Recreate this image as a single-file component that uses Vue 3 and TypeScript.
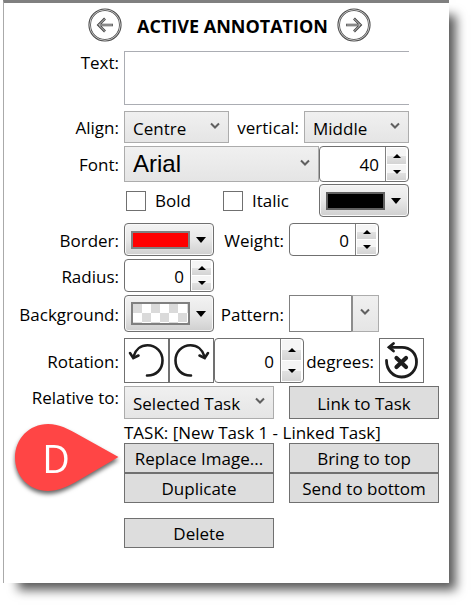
<script setup lang="ts">
import { ref } from 'vue'

const text = ref('')
const align = ref('Centre')
const vertical = ref('Middle')
const font = ref('Arial')
const size = ref(40)
const bold = ref(false)
const italic = ref(false)
const weight = ref(0)
const radius = ref(0)
const pattern = ref('')
const rotation = ref(0)
const relativeTo = ref('Selected Task')
const linkedTask = ref('New Task 1 - Linked Task')

function rotate(step: number): void {
  rotation.value = (rotation.value + step + 360) % 360
}
</script>

<template>
  <div class="page">
    <main class="panel">
      <header class="header">
        <button class="nav" type="button" aria-label="Previous annotation">
          <svg viewBox="0 0 34 34" width="34" height="34" fill="none">
            <circle cx="17" cy="17" r="15.3" stroke="#4a4a4a" stroke-width="2.6" />
            <circle cx="17" cy="17" r="15.3" stroke="#d4d4d4" stroke-width="0.9" />
            <path d="M25 17H11M17 10.500L10.500 17L17 23.500" stroke="#444" stroke-width="2.6" />
            <path d="M24.500 17H11M16.800 10.800L10.600 17L16.800 23.200" stroke="#ddd" stroke-width="0.900" />
          </svg>
        </button>
        <h1 class="title">ACTIVE ANNOTATION</h1>
        <button class="nav" type="button" aria-label="Next annotation">
          <svg viewBox="0 0 34 34" width="34" height="34" fill="none">
            <circle cx="17" cy="17" r="15.3" stroke="#4a4a4a" stroke-width="2.6" />
            <circle cx="17" cy="17" r="15.3" stroke="#d4d4d4" stroke-width="0.9" />
            <path d="M9 17H23M17 10.500L23.500 17L17 23.500" stroke="#444" stroke-width="2.6" />
            <path d="M9.500 17H23M17.200 10.800L23.400 17L17.200 23.200" stroke="#ddd" stroke-width="0.900" />
          </svg>
        </button>
      </header>

      <div class="row row-text">
        <label class="label label-top" for="text">Text:</label>
        <textarea id="text" v-model="text" class="textarea"></textarea>
      </div>

      <div class="row row-align">
        <label class="label" for="align">Align:</label>
        <div class="select w-105">
          <select id="align" v-model="align">
            <option>Left</option>
            <option>Centre</option>
            <option>Right</option>
          </select>
          <svg class="chevron" viewBox="0 0 10 8" width="10" height="8"><path d="M1 1.500L5 5.500L9 1.500" /></svg>
        </div>
        <label class="label-mid" for="vertical">vertical:</label>
        <div class="select w-105">
          <select id="vertical" v-model="vertical">
            <option>Top</option>
            <option>Middle</option>
            <option>Bottom</option>
          </select>
          <svg class="chevron" viewBox="0 0 10 8" width="10" height="8"><path d="M1 1.500L5 5.500L9 1.500" /></svg>
        </div>
      </div>

      <div class="row row-font">
        <label class="label" for="font">Font:</label>
        <div class="select select-font w-195">
          <select id="font" v-model="font">
            <option>Arial</option>
          </select>
          <svg class="chevron" viewBox="0 0 10 8" width="10" height="8"><path d="M1 1.500L5 5.500L9 1.500" /></svg>
        </div>
        <div class="spinner">
          <input v-model.number="size" type="number" aria-label="Font size" />
          <div class="steps">
            <button type="button" aria-label="Increase font size" @click="size++"><i class="up"></i></button>
            <button type="button" aria-label="Decrease font size" @click="size--"><i class="down"></i></button>
          </div>
        </div>
      </div>

      <div class="row row-style">
        <span class="label"></span>
        <div class="checks">
          <label class="check"><input v-model="bold" type="checkbox" />Bold</label>
          <label class="check"><input v-model="italic" type="checkbox" />Italic</label>
        </div>
        <button class="colour" type="button" aria-label="Text colour">
          <span class="swatch black"></span><i class="drop"></i>
        </button>
      </div>

      <div class="row row-border">
        <label class="label" for="border-colour">Border:</label>
        <button id="border-colour" class="colour" type="button">
          <span class="swatch red"></span><i class="drop"></i>
        </button>
        <label class="label-mid" for="weight">Weight:</label>
        <div class="spinner">
          <input id="weight" v-model.number="weight" type="number" />
          <div class="steps">
            <button type="button" aria-label="Increase weight" @click="weight++"><i class="up"></i></button>
            <button type="button" aria-label="Decrease weight" @click="weight--"><i class="down"></i></button>
          </div>
        </div>
      </div>

      <div class="row row-radius">
        <label class="label" for="radius">Radius:</label>
        <div class="spinner">
          <input id="radius" v-model.number="radius" type="number" />
          <div class="steps">
            <button type="button" aria-label="Increase radius" @click="radius++"><i class="up"></i></button>
            <button type="button" aria-label="Decrease radius" @click="radius--"><i class="down"></i></button>
          </div>
        </div>
      </div>

      <div class="row row-background">
        <label class="label" for="background">Background:</label>
        <button id="background" class="colour" type="button">
          <span class="swatch clear"></span><i class="drop"></i>
        </button>
        <label class="label-mid" for="pattern">Pattern:</label>
        <div class="select pattern">
          <select id="pattern" v-model="pattern">
            <option value=""></option>
          </select>
          <span class="pattern-arrow"></span>
          <svg class="chevron" viewBox="0 0 10 8" width="10" height="8"><path d="M1 1.500L5 5.500L9 1.500" /></svg>
        </div>
      </div>

      <div class="row row-rotation">
        <label class="label" for="rotation">Rotation:</label>
        <button class="icon" type="button" aria-label="Rotate left" @click="rotate(-90)">
          <svg viewBox="0 0 45 45" width="45" height="45">
            <path d="M23 37.500C32 37.800 38.500 31.500 38.500 22.500C38.500 14 32 7.300 23.500 7.300C17 7.300 11.500 11.500 9.500 18.500" stroke-width="2.600" />
            <path d="M6 15L9.300 20L14.500 17.500" stroke-width="2.600" />
          </svg>
        </button>
        <button class="icon" type="button" aria-label="Rotate right" @click="rotate(90)">
          <svg viewBox="0 0 45 45" width="45" height="45">
            <path d="M22 37.500C13 37.800 6.500 31.500 6.500 22.500C6.500 14 13 7.300 21.500 7.300C28 7.300 33.500 11.500 35.500 18.500" stroke-width="2.600" />
            <path d="M39 15L35.700 20L30.500 17.500" stroke-width="2.600" />
          </svg>
        </button>
        <div class="spinner">
          <input id="rotation" v-model.number="rotation" type="number" />
          <div class="steps">
            <button type="button" aria-label="Increase rotation" @click="rotate(1)"><i class="up"></i></button>
            <button type="button" aria-label="Decrease rotation" @click="rotate(-1)"><i class="down"></i></button>
          </div>
        </div>
        <span class="label-mid">degrees:</span>
        <button class="icon" type="button" aria-label="Reset rotation" @click="rotation = 0">
          <svg viewBox="0 0 45 45" width="45" height="45">
            <path d="M7.500 22.500C7.500 32 14 39 22.500 39C31.500 39 37.500 32 37.500 24C37.500 15 31 9.300 23 9.300H10.500" stroke-width="2.800" />
            <path d="M14.500 5.500L10 9.300L14.500 13" stroke-width="2.800" />
            <path d="M17.500 20L27 29M27 20L17.500 29" stroke-width="4.200" stroke-linecap="butt" />
          </svg>
        </button>
      </div>

      <div class="row row-relative">
        <label class="label label-top" for="relative">Relative to:</label>
        <div class="select w-150">
          <select id="relative" v-model="relativeTo">
            <option>Selected Task</option>
            <option>Timeline</option>
          </select>
          <svg class="chevron" viewBox="0 0 10 8" width="10" height="8"><path d="M1 1.500L5 5.500L9 1.500" /></svg>
        </div>
        <button class="button after-gap" type="button">Link to Task</button>
      </div>

      <p class="task">TASK: [{{ linkedTask }}]</p>

      <div class="actions">
        <button class="button" type="button">Replace Image...</button>
        <button class="button" type="button">Bring to top</button>
        <button class="button" type="button">Duplicate</button>
        <button class="button" type="button">Send to bottom</button>
        <div class="pin">
          <svg viewBox="0 0 106 70" width="106" height="70">
            <path d="M34 1C15 1 1 16 1 34.500C1 53 15 68 34 68C44 68 52 64 60 60L104.500 34L65 12C54 6 46 1 34 1Z" fill="#ff4545" />
          </svg>
          <span>D</span>
        </div>
      </div>
      <div class="actions last">
        <button class="button" type="button">Delete</button>
      </div>
    </main>
  </div>
</template>

<style>
body {
  margin: 0;
  background: #fff;
}
</style>

<style scoped>
.page {
  padding: 0 27px 27px 3px;
}

.panel {
  box-sizing: border-box;
  padding: 5px 0 35px;
  border-top: 3px solid #808080;
  border-left: 1px solid #aaa;
  background: #fff;
  box-shadow: 11px 11px 10px -4px rgba(0, 0, 0, 0.65);
  color: #000;
  font-family: "Open Sans", "Noto Sans", sans-serif;
  font-size: 17px;
  line-height: 24px;
}

button,
input,
select,
textarea {
  box-sizing: border-box;
  margin: 0;
  padding: 0;
  color: #000;
  font: inherit;
}

.header {
  display: flex;
  align-items: center;
  gap: 15px;
  height: 34px;
  padding-left: 84px;
  margin-bottom: 9px;
}

.nav {
  display: flex;
  flex: none;
  border: 0;
  background: none;
}

.title {
  margin: 0;
  width: 185px;
  padding-top: 1px;
  font-size: 18px;
  font-weight: 700;
  line-height: 24px;
  white-space: nowrap;
}

.row {
  display: flex;
  align-items: stretch;
}

.label,
.label-mid {
  display: flex;
  flex: none;
  box-sizing: border-box;
  align-items: center;
  justify-content: flex-end;
  padding: 2px 5px 0 0;
  white-space: nowrap;
}

.label {
  width: 120px;
}

.label-mid {
  width: 75px;
}

.label-top {
  align-items: flex-start;
  padding-top: 0;
}

.row-text {
  height: 54px;
  margin-bottom: 6px;
}

.row-align {
  height: 32px;
  margin-bottom: 3px;
}

.row-font {
  height: 36px;
  margin-bottom: 2px;
}

.row-style {
  height: 33px;
  margin-bottom: 6px;
}

.row-border,
.row-radius {
  height: 33px;
  margin-bottom: 3px;
}

.row-background {
  height: 37px;
  margin-bottom: 6px;
}

.row-rotation {
  height: 45px;
  margin-bottom: 3px;
}

.row-relative {
  height: 33px;
}

.textarea {
  flex: 1;
  margin-right: 40px;
  padding: 2px 4px;
  border: 1px solid #abadb3;
  border-right: 0;
  border-radius: 0;
  background: #fff;
  resize: none;
}

.select {
  display: grid;
  flex: none;
}

.select > * {
  grid-area: 1 / 1;
}

.select select {
  width: 100%;
  height: 100%;
  padding: 3px 28px 0 8px;
  border: 1px solid #acacac;
  border-radius: 0;
  background: linear-gradient(#f0f0f0, #e5e5e5);
  appearance: none;
}

.select-font select {
  padding-top: 0;
  font-family: "Liberation Sans", Arial, sans-serif;
  font-size: 24px;
}

.chevron {
  align-self: center;
  justify-self: end;
  margin: 0 9px 3px 0;
  pointer-events: none;
}

.chevron path {
  fill: none;
  stroke: #606060;
  stroke-width: 2;
}

.w-105 {
  width: 105px;
}

.w-150 {
  width: 150px;
}

.w-195 {
  width: 195px;
}

.pattern {
  width: 90px;
}

.pattern select {
  border-color: #808080;
  background: #fff;
}

.pattern-arrow {
  justify-self: end;
  width: 28px;
  box-sizing: border-box;
  border: 1px solid #acacac;
  border-left: 2px solid #8c8c8c;
  background: linear-gradient(#f0f0f0, #e5e5e5);
  pointer-events: none;
}

.spinner {
  display: flex;
  flex: none;
  box-sizing: border-box;
  width: 90px;
  border: 1px solid #707070;
  border-radius: 4px;
  background: #fff;
  overflow: hidden;
}

.spinner input {
  flex: 1;
  min-width: 0;
  padding: 2px 6px 0 0;
  border: 0;
  background: none;
  text-align: right;
  appearance: textfield;
}

.spinner input::-webkit-inner-spin-button {
  display: none;
}

.steps {
  display: flex;
  flex-direction: column;
  gap: 1px;
  box-sizing: border-box;
  width: 23px;
  padding: 1px 2px 1px 1px;
  border-left: 1px solid #808080;
}

.steps button {
  display: flex;
  flex: 1;
  align-items: center;
  justify-content: center;
  border: 0;
  background: linear-gradient(#f5f5f5 0 50%, #e2e2e2 50%, #d4d4d4);
}

.up,
.down,
.drop {
  border: 4px solid transparent;
}

.up {
  border-top: 0;
  border-bottom-color: #000;
}

.down {
  border-bottom: 0;
  border-top-color: #000;
}

.drop {
  border-width: 6px 5px 0;
  border-top-color: #000;
}

.checks {
  display: grid;
  grid-template-columns: 97px 98px;
  align-items: center;
}

.check {
  display: flex;
  align-items: center;
  gap: 9px;
  padding: 1px 0 0 2px;
}

.check input {
  width: 20px;
  height: 20px;
  border: 1px solid #707070;
  background: #fff;
  appearance: none;
}

.check input:checked {
  background: #404040;
  box-shadow: inset 0 0 0 3px #fff;
}

.colour {
  display: flex;
  flex: none;
  align-items: center;
  gap: 6px;
  width: 90px;
  padding: 0 6px;
  border: 1px solid #707070;
  border-radius: 4px;
  background: linear-gradient(#f3f3f3, #e8e8e8 50%, #cfcfcf);
  box-shadow: inset 0 0 0 1px #f8f8f8;
}

.swatch {
  box-sizing: border-box;
  width: 59px;
  height: 18px;
  border: 2px solid #808080;
}

.black {
  border-color: #606060;
  background: #000;
}

.red {
  background: #f00;
}

.clear {
  height: 23px;
  background: repeating-conic-gradient(#fff 0 25%, #dadada 0 50%) 0 0 / 18px 18px;
}

.icon {
  display: flex;
  flex: none;
  align-items: center;
  justify-content: center;
  width: 45px;
  border: 1px solid #707070;
  background: #fff;
  overflow: hidden;
}

.icon svg {
  flex: none;
}

.icon path {
  fill: none;
  stroke: #1c1c1c;
  stroke-linecap: round;
}

.button {
  width: 150px;
  padding-top: 2px;
  border: 1px solid #707070;
  border-radius: 0;
  background: #ddd;
  white-space: nowrap;
}

.after-gap {
  margin-left: 15px;
}

.task {
  margin: 0;
  padding: 3px 0 0 120px;
  line-height: 21px;
}

.actions {
  position: relative;
  display: grid;
  grid-template-columns: 150px 150px;
  grid-auto-rows: 30px;
  column-gap: 15px;
  padding-left: 120px;
}

.last {
  margin-top: 15px;
}

/* Callout marker that overlaps the action buttons' left margin */
.pin {
  position: absolute;
  top: -20px;
  left: 10px;
  display: grid;
  filter: drop-shadow(0 3px 2px rgba(0, 0, 0, 0.6));
}

.pin > * {
  grid-area: 1 / 1;
}

.pin span {
  align-self: center;
  width: 84px;
  color: #fff;
  font-size: 38px;
  line-height: 70px;
  text-align: center;
}
</style>
